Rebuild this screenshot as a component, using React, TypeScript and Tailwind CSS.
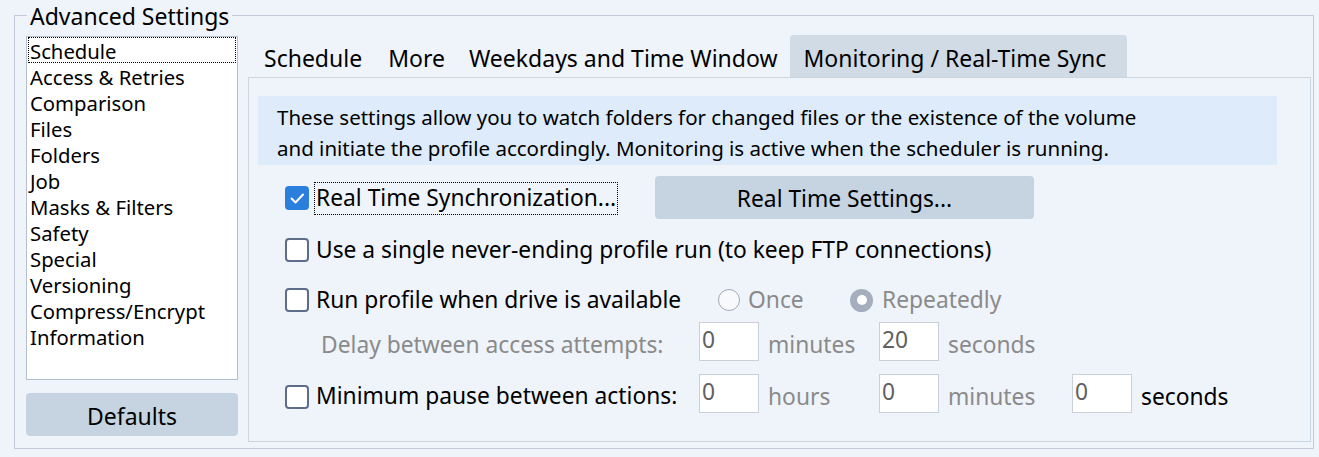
import React from "react";

function CheckBox({ checked = false }: { checked?: boolean }) {
  if (checked) {
    return (
      <div className="w-[24px] h-[24px] rounded-[4px] bg-[#2b7fdc] flex items-center justify-center shrink-0">
        <svg width="24" height="24" viewBox="0 0 24 24">
          <polyline points="6.5,12.5 10.5,16.5 18,8.5" fill="none" stroke="white" strokeWidth="2" strokeLinecap="round" strokeLinejoin="round" />
        </svg>
      </div>
    );
  }
  return <div className="w-[24px] h-[24px] rounded-[4px] border-2 border-[#5c6c89] bg-white shrink-0" />;
}

function NumBox({ v }: { v: string }) {
  return (
    <div className="w-[60px] h-[39px] bg-white border border-[#c9d0da] pl-[2px] text-[#606060] leading-[34px] shrink-0">{v}</div>
  );
}

export default function App() {
  const items = [
    "Schedule",
    "Access & Retries",
    "Comparison",
    "Files",
    "Folders",
    "Job",
    "Masks & Filters",
    "Safety",
    "Special",
    "Versioning",
    "Compress/Encrypt",
    "Information",
  ];
  return (
    <div className="w-[1319px] h-[457px] bg-[#eff4fb] text-[22.8px] text-black font-['Noto_Sans',sans-serif] overflow-hidden pt-[15px] pl-[14px]">
      <div className="relative w-[1300px] h-[434px] border border-[#c2cbd7] flex pl-[11px] pt-[20px]">
        <div className="absolute left-[12px] top-[-16px] px-[3px] bg-[#eff4fb] leading-[32px] text-[23px]">Advanced Settings</div>
        {/* left column */}
        <div className="flex flex-col w-[212px]">
          <div className="h-[344px] bg-white border border-[#b5bfcd] px-[1px] text-[20.3px]">
            {items.map((it, i) => (
              <div
                key={it}
                className={
                  "h-[26px] leading-[24px] pl-[1px] pt-[1px] whitespace-nowrap " +
                  (i === 0 ? "border border-dotted border-black" : "border border-transparent")
                }
              >
                {it}
              </div>
            ))}
          </div>
          <div className="mt-[13px] h-[43px] rounded-[4px] bg-[#c6d4e1] flex items-center justify-center pt-[3px] text-[23px]">Defaults</div>
        </div>
        {/* right column */}
        <div className="ml-[10px] w-[1063px] flex flex-col">
          <div className="h-[42px] -mt-[1px] flex items-end pl-[2px] whitespace-nowrap text-[23px]">
            <div className="h-[42px] px-[14px] pt-[5px] flex items-center">Schedule</div>
            <div className="h-[42px] px-[12px] pt-[5px] flex items-center">More</div>
            <div className="h-[42px] px-[12px] pt-[5px] flex items-center">Weekdays and Time Window</div>
            <div className="h-[42px] pl-[14px] pr-[21px] pt-[5px] flex items-center bg-[#d0dbe6] rounded-t-[4px]">Monitoring / Real-Time Sync</div>
          </div>
          <div className="h-[365px] border border-[#cbd5e0] pl-[9px] pt-[18px]">
            <div className="w-[1019px] h-[69px] bg-[#ddebfb] pl-[19px] pt-[6px] leading-[31px] whitespace-nowrap text-[20.5px]">
              <div>These settings allow you to watch folders for changed files or the existence of the volume</div>
              <div>and initiate the profile accordingly. Monitoring is active when the scheduler is running.</div>
            </div>
            <div className="pl-[27px] whitespace-nowrap">
              {/* row 1 */}
              <div className="mt-[11px] h-[43px] flex items-center">
                <div className="w-[370px] flex items-center shrink-0">
                  <CheckBox checked />
                  <div className="ml-[5px] h-[33px] border border-dotted border-black px-[1px] leading-[30px] mt-[1px]">Real Time Synchronization...</div>
                </div>
                <div className="w-[379px] h-[43px] rounded-[4px] bg-[#c6d4e1] flex items-center justify-center pt-[3px]">Real Time Settings...</div>
              </div>
              {/* row 2 */}
              <div className="mt-[11px] h-[40px] flex items-center">
                <CheckBox />
                <div className="ml-[7px]">Use a single never-ending profile run (to keep FTP connections)</div>
              </div>
              {/* row 3 */}
              <div className="mt-[10px] h-[40px] flex items-center">
                <div className="w-[433px] flex items-center shrink-0">
                  <CheckBox />
                  <div className="ml-[7px]">Run profile when drive is available</div>
                </div>
                <div className="w-[132px] flex items-center shrink-0 text-[#8a8a8a]">
                  <div className="w-[22px] h-[22px] rounded-full border-[1.5px] border-[#a2abb8] bg-[#f7f9fc]" />
                  <div className="ml-[8px]">Once</div>
                </div>
                <div className="flex items-center text-[#8a8a8a]">
                  <div className="w-[23px] h-[23px] rounded-full bg-[#a4aebc] flex items-center justify-center">
                    <div className="w-[10px] h-[10px] rounded-full bg-white" />
                  </div>
                  <div className="ml-[9px]">Repeatedly</div>
                </div>
              </div>
              {/* row 4 */}
              <div className="mt-[2px] h-[39px] flex items-center text-[#8a8a8a]">
                <div className="w-[414px] pl-[36px] pt-[8px] shrink-0">Delay between access attempts:</div>
                <NumBox v="0" />
                <div className="w-[120px] pl-[9px] pt-[8px] shrink-0">minutes</div>
                <NumBox v="20" />
                <div className="pl-[9px] pt-[8px]">seconds</div>
              </div>
              {/* row 5 */}
              <div className="mt-[13px] h-[39px] flex items-center">
                <div className="w-[414px] flex items-center shrink-0 pt-[6px]">
                  <CheckBox />
                  <div className="ml-[7px]">Minimum pause between actions:</div>
                </div>
                <NumBox v="0" />
                <div className="w-[120px] pl-[9px] pt-[8px] shrink-0 text-[#8a8a8a]">hours</div>
                <NumBox v="0" />
                <div className="w-[133px] pl-[9px] pt-[8px] shrink-0 text-[#8a8a8a]">minutes</div>
                <NumBox v="0" />
                <div className="pl-[9px] pt-[8px]">seconds</div>
              </div>
            </div>
          </div>
        </div>
      </div>
    </div>
  );
}
